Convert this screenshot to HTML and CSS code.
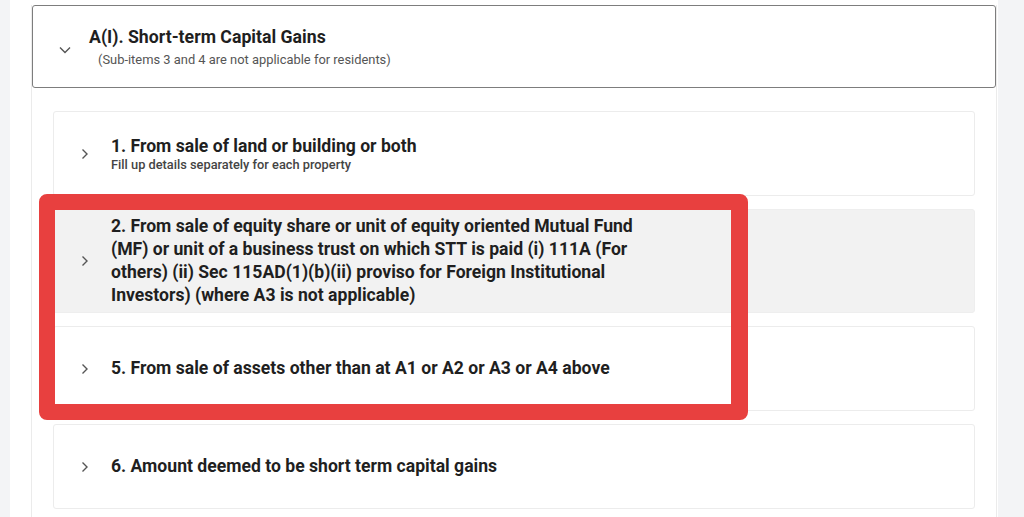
FILE: index.html
```html
<!DOCTYPE html>
<html>
  <head>
    <meta charset="utf-8">
    <meta name="viewport" content="width=device-width">
    <title>Schedule CG - Short-term Capital Gains</title>
    <link rel="stylesheet" href="styles.css">
  </head>
  <body>
    <div class="page">
      <div class="accordion">
        <div class="acc-head">
          <svg class="chev" width="12" height="12" viewBox="0 0 12 12"><polyline points="1,3.5 6,8.5 11,3.5"/></svg>
          <div>
            <div class="acc-title">A(I). Short-term Capital Gains</div>
            <div class="acc-note">(Sub-items 3 and 4 are not applicable for residents)</div>
          </div>
        </div>

        <div class="acc-body">
          <div class="item">
            <svg class="chev" width="12" height="12" viewBox="0 0 12 12"><polyline points="3.5,1.5 8,6 3.5,10.5"/></svg>
            <div>
              <div class="item-title">1. From sale of land or building or both</div>
              <div class="item-note">Fill up details separately for each property</div>
            </div>
          </div>
          <div class="item active">
            <svg class="chev" width="12" height="12" viewBox="0 0 12 12"><polyline points="3.5,1.5 8,6 3.5,10.5"/></svg>
            <div class="item-title wide">2. From sale of equity share or unit of equity oriented Mutual Fund (MF) or unit of a business trust on which STT is paid (i) 111A (For others) (ii) Sec 115AD(1)(b)(ii) proviso for Foreign Institutional Investors) (where A3 is not applicable)</div>
          </div>
          <div class="item">
            <svg class="chev" width="12" height="12" viewBox="0 0 12 12"><polyline points="3.5,1.5 8,6 3.5,10.5"/></svg>
            <div class="item-title">5. From sale of assets other than at A1 or A2 or A3 or A4 above</div>
          </div>
          <div class="item">
            <svg class="chev" width="12" height="12" viewBox="0 0 12 12"><polyline points="3.5,1.5 8,6 3.5,10.5"/></svg>
            <div class="item-title">6. Amount deemed to be short term capital gains</div>
          </div>
        </div>
      </div>

      <!-- highlight frame drawn over items 2 and 5 -->
      <div class="highlight"></div>
    </div>
  </body>
</html>
```

FILE: styles.css
```css
html, body {
  margin: 0;
  height: 100%;
}
body {
  background: #f3f4f6;
  font-family: Roboto, "Liberation Sans", sans-serif;
  color: #222;
  overflow: hidden;
}
.page {
  position: relative;
  margin-left: 10px;
  width: 988px;
  height: 100%;
  background: #fff;
  padding: 5px 0 0 21px;
  box-sizing: border-box;
}
.accordion {
  width: 966px;
  height: 100%;
  border-left: 1px solid #ebebeb;
  border-right: 1px solid #ebebeb;
  box-sizing: border-box;
}
.acc-head {
  display: flex;
  align-items: center;
  gap: 18px;
  height: 83px;
  padding-left: 26px;
  border: 1.5px solid #7d7d7d;
  border-radius: 3px;
  box-sizing: border-box;
}
.acc-head .chev {
  margin-top: 6px;
}
.chev {
  flex: none;
  fill: none;
  stroke: #555;
  stroke-width: 1.4;
}
.acc-title {
  font-size: 17.7px;
  font-weight: 700;
  color: #1f1f1f;
}
.acc-note {
  margin: 5px 0 0 9px;
  font-size: 12.9px;
  color: #555;
}
.acc-body {
  display: flex;
  flex-direction: column;
  gap: 13px;
  padding: 23px 21px 0 21px;
}
.item {
  display: flex;
  align-items: center;
  gap: 20px;
  min-height: 85px;
  padding-left: 25px;
  border: 1px solid #ececec;
  border-radius: 3px;
  background: #fff;
  box-sizing: border-box;
}
.item.active {
  min-height: 104px;
  background: #f2f2f2;
  border-color: #eeeeee;
}
.item-title {
  font-size: 17.6px;
  font-weight: 700;
  line-height: 23px;
  color: #1f1f1f;
}
.item-title.wide {
  max-width: 535px;
}
.item-note {
  margin-top: -1px;
  font-size: 12.8px;
  font-weight: 500;
  color: #444;
}
.highlight {
  position: absolute;
  left: 29px;
  top: 194px;
  width: 709px;
  height: 226px;
  border: 16px solid #e8403f;
  border-right-width: 17px;
  border-radius: 8px;
  box-sizing: border-box;
}
```
